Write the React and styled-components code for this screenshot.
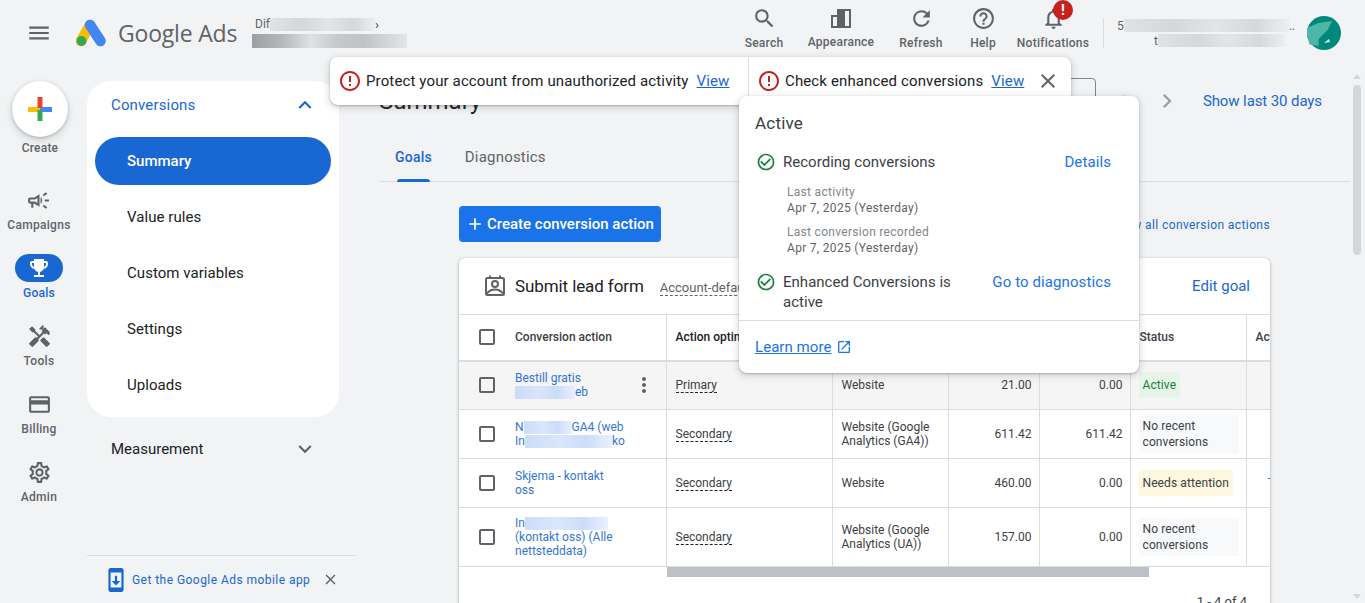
import styled, { createGlobalStyle } from "styled-components";
import {
  MdMenu,
  MdSearch,
  MdRefresh,
  MdHelpOutline,
  MdNotificationsNone,
  MdOutlineCampaign,
  MdEmojiEvents,
  MdHandyman,
  MdPayment,
  MdOutlineSettings,
  MdExpandLess,
  MdExpandMore,
  MdClose,
  MdCheckCircleOutline,
  MdOpenInNew,
  MdErrorOutline,
  MdMoreVert,
  MdAdd,
  MdChevronLeft,
  MdChevronRight,
  MdSystemUpdate,
} from "react-icons/md";

const GlobalStyle = createGlobalStyle`
  html, body {
    margin: 0;
    padding: 0;
    background: #f1f3f4;
    font-family: Roboto, "Liberation Sans", sans-serif;
    color: #3c4043;
  }
  * { box-sizing: border-box; }
`;

const Blur = styled.span`
  display: inline-block;
  width: ${(p) => p.$w}px;
  height: ${(p) => (p.$tone === "dark" ? 14 : 13)}px;
  vertical-align: middle;
  background: ${(p) =>
    p.$tone === "blue"
      ? "linear-gradient(90deg, #c6dafa, #d6e4fb 40%, #c6dafa 70%, #e8f0fe)"
      : p.$tone === "dark"
        ? "linear-gradient(90deg, #9da0a3, #b2b4b6 18%, #dfe1e3 38%, #c6c8ca 55%, #c0c2c4 72%, #e4e5e6)"
        : "linear-gradient(90deg, #e0e2e4, #d5d8da 30%, #e2e4e6 55%, #d6d9db 80%, #eceef0)"};
`;

const railItems = [
  { label: "Campaigns", Icon: MdOutlineCampaign },
  { label: "Goals", Icon: MdEmojiEvents, active: true },
  { label: "Tools", Icon: MdHandyman },
  { label: "Billing", Icon: MdPayment },
  { label: "Admin", Icon: MdOutlineSettings },
];

const rows = [
  {
    name: (
      <>
        Bestill gratis
        <br />
        <Blur $w={60} $tone="blue" />
        eb
      </>
    ),
    optimization: "Primary",
    source: "Website",
    value: "21.00",
    all: "0.00",
    status: "Active",
    tone: "active",
    selected: true,
    height: 49,
  },
  {
    name: (
      <>
        N<Blur $w={48} $tone="blue" />
        GA4 (web
        <br />
        In
        <Blur $w={87} $tone="blue" />
        ko
      </>
    ),
    optimization: "Secondary",
    source: "Website (Google Analytics (GA4))",
    value: "611.42",
    all: "611.42",
    status: "No recent conversions",
    tone: "idle",
    height: 49,
  },
  {
    name: "Skjema - kontakt oss",
    optimization: "Secondary",
    source: "Website",
    value: "460.00",
    all: "0.00",
    status: "Needs attention",
    tone: "warn",
    action: "Troubleshoot",
    height: 49,
  },
  {
    name: (
      <>
        In
        <Blur $w={83} $tone="blue" />
        <br />
        (kontakt oss) (Alle nettsteddata)
      </>
    ),
    optimization: "Secondary",
    source: "Website (Google Analytics (UA))",
    value: "157.00",
    all: "0.00",
    status: "No recent conversions",
    tone: "idle",
    height: 59,
  },
];

function AppearanceIcon() {
  return (
    <svg width="24" height="24" viewBox="0 0 24 24" fill="#5f6368">
      <path fillRule="evenodd" d="M2 9h6V3h14v19H2zM4 11v9h4v-9zM16 5v15h4V5z" />
    </svg>
  );
}

function LeadFormIcon() {
  return (
    <svg width="24" height="24" viewBox="0 0 24 24" fill="none" stroke="#5f6368" strokeWidth="2">
      <rect x="3" y="4" width="18" height="17" rx="1.5" />
      <path d="M7 1.5v3M17 1.5v3" />
      <circle cx="12" cy="10" r="3" />
      <path d="M4 19.500c2-2.800 5-4 8-4s6 1.200 8 4" />
    </svg>
  );
}

export default function App() {
  return (
    <Page>
      <GlobalStyle />
      <Header>
        <MenuButton>
          <MdMenu size={26} />
        </MenuButton>
        <Logo width="32" height="28" viewBox="0 0 32 28">
          <path d="M14 6 5 22" stroke="#fbbc04" strokeWidth="10.5" strokeLinecap="round" />
          <path d="M14 6l10.500 16" stroke="#4285f4" strokeWidth="10.5" strokeLinecap="round" />
          <circle cx="5.500" cy="22" r="5" fill="#34a853" />
        </Logo>
        <Brand>Google Ads</Brand>
        <AccountName>
          <AccountLine>
            Dif
            <Blur $w={105} />
            <SmallCaret>›</SmallCaret>
          </AccountLine>
          <AccountBlur $w={155} $tone="dark" />
        </AccountName>
        <Tools>
          <ToolItem $w={64}>
            <MdSearch size={25} />
            <span>Search</span>
          </ToolItem>
          <ToolItem $w={90}>
            <AppearanceIcon />
            <span>Appearance</span>
          </ToolItem>
          <ToolItem $w={70}>
            <MdRefresh size={25} />
            <span>Refresh</span>
          </ToolItem>
          <ToolItem $w={54}>
            <MdHelpOutline size={25} />
            <span>Help</span>
          </ToolItem>
          <ToolItem $w={86}>
            <MdNotificationsNone size={25} />
            <span>Notifications</span>
            <Badge>!</Badge>
          </ToolItem>
        </Tools>
        <UserBox>
          <UserLine>
            5<Blur $w={165} />
            ..
          </UserLine>
          <UserLine $inset>
            t<Blur $w={127} />
          </UserLine>
        </UserBox>
        <Avatar width="34" height="34" viewBox="0 0 34 34">
          <circle cx="17" cy="17" r="17" fill="#00897b" />
          <path d="M0 12 11.600 7 25 5l-4.400 9-9 9v7l-9-1.400L0 20z" fill="#4db6a5" />
          <path d="M17 27l5-4 1 3z" fill="#dff3f0" />
        </Avatar>
      </Header>

      <Body>
        <Rail>
          <CreateItem>
            <CreateButton>
              <svg width="24" height="24" viewBox="0 0 24 24">
                <rect x="0" y="10" width="12" height="5" fill="#fbbc04" />
                <rect x="12" y="10" width="12" height="5" fill="#4285f4" />
                <rect x="9.500" y="0" width="5" height="11" fill="#ea4335" />
                <rect x="9.500" y="13" width="5" height="11" fill="#34a853" />
              </svg>
            </CreateButton>
            <span>Create</span>
          </CreateItem>
          {railItems.map(({ label, Icon, active }) => (
            <RailItem key={label} $active={active}>
              <RailIcon $active={active}>
                <Icon size={active ? 24 : 25} />
              </RailIcon>
              <span>{label}</span>
            </RailItem>
          ))}
        </Rail>

        <SideColumn>
          <SideCard>
            <SideHeader>
              Conversions
              <MdExpandLess size={26} />
            </SideHeader>
            <SideLink $active>Summary</SideLink>
            <SideLink>Value rules</SideLink>
            <SideLink>Custom variables</SideLink>
            <SideLink>Settings</SideLink>
            <SideLink>Uploads</SideLink>
          </SideCard>
          <SideSection>
            Measurement
            <MdExpandMore size={26} />
          </SideSection>
          <AppPromo>
            <MdSystemUpdate size={26} />
            <span>Get the Google Ads mobile app</span>
            <MdClose size={17} />
          </AppPromo>
        </SideColumn>

        <Main>
          <TopRow>
            <Title>Summary</Title>
            <DateBox />
            <PagerIcon $faded>
              <MdChevronLeft size={28} />
            </PagerIcon>
            <PagerIcon>
              <MdChevronRight size={28} />
            </PagerIcon>
            <RangeLink>Show last 30 days</RangeLink>
          </TopRow>
          <Tabs>
            <Tab $active>Goals</Tab>
            <Tab>Diagnostics</Tab>
          </Tabs>
          <Content>
            <ActionRow>
              <CreateAction>
                <MdAdd size={20} />
                Create conversion action
              </CreateAction>
              <AllLink>View all conversion actions</AllLink>
            </ActionRow>
            <Card>
              <CardHeader>
                <LeadFormIcon />
                <CardTitle>Submit lead form</CardTitle>
                <DottedLabel>Account-default</DottedLabel>
                <EditLink>Edit goal</EditLink>
              </CardHeader>
              <TableClip>
                <Table>
                  <colgroup>
                    <col width="207" />
                    <col width="166" />
                    <col width="116" />
                    <col width="91" />
                    <col width="91" />
                    <col width="116" />
                    <col width="130" />
                  </colgroup>
                  <thead>
                    <tr>
                      <HeadCell>
                        <NameCell>
                          <Check />
                          Conversion action
                        </NameCell>
                      </HeadCell>
                      <HeadCell $strong>Action optimization</HeadCell>
                      <HeadCell>Action source</HeadCell>
                      <HeadCell>All conv.</HeadCell>
                      <HeadCell>Value</HeadCell>
                      <HeadCell>Status</HeadCell>
                      <HeadCell>Actions</HeadCell>
                    </tr>
                  </thead>
                  <tbody>
                    {rows.map((row) => (
                      <Row key={row.value} $selected={row.selected} style={{ height: row.height }}>
                        <Cell>
                          <NameCell>
                            <Check />
                            <ActionName>{row.name}</ActionName>
                            {row.selected && (
                              <MoreIcon>
                                <MdMoreVert size={24} />
                              </MoreIcon>
                            )}
                          </NameCell>
                        </Cell>
                        <Cell>
                          <Optimization>{row.optimization}</Optimization>
                        </Cell>
                        <Cell>{row.source}</Cell>
                        <NumberCell>{row.value}</NumberCell>
                        <NumberCell>{row.all}</NumberCell>
                        <StatusCell>
                          <StatusChip $tone={row.tone}>{row.status}</StatusChip>
                        </StatusCell>
                        <Cell>{row.action && <Troubleshoot>{row.action}</Troubleshoot>}</Cell>
                      </Row>
                    ))}
                  </tbody>
                </Table>
              </TableClip>
              <HScroll>
                <HThumb />
              </HScroll>
              <Pagination>1 - 4 of 4</Pagination>
            </Card>
          </Content>
        </Main>
      </Body>

      <Banner>
        <BannerPart $w={418}>
          <MdErrorOutline size={24} />
          <span>Protect your account from unauthorized activity</span>
          <BannerLink>View</BannerLink>
        </BannerPart>
        <BannerPart $w={323}>
          <MdErrorOutline size={24} />
          <span>Check enhanced conversions</span>
          <BannerLink>View</BannerLink>
          <BannerClose>
            <MdClose size={24} />
          </BannerClose>
        </BannerPart>
      </Banner>

      <Popover>
        <PopoverTitle>Active</PopoverTitle>
        <StatusRow>
          <MdCheckCircleOutline size={20} />
          <StatusText>Recording conversions</StatusText>
          <PopoverLink>Details</PopoverLink>
        </StatusRow>
        <Detail>
          Last activity
          <strong>Apr 7, 2025 (Yesterday)</strong>
        </Detail>
        <Detail>
          Last conversion recorded
          <strong>Apr 7, 2025 (Yesterday)</strong>
        </Detail>
        <StatusRow $spaced>
          <MdCheckCircleOutline size={20} />
          <StatusText>Enhanced Conversions is active</StatusText>
          <PopoverLink>Go to diagnostics</PopoverLink>
        </StatusRow>
        <PopoverFooter>
          <LearnMore>Learn more</LearnMore>
          <MdOpenInNew size={16} />
        </PopoverFooter>
      </Popover>

      <PageScroll>
        <ScrollArrow $dir="up" />
        <ScrollThumb />
        <ScrollArrow $dir="down" />
      </PageScroll>
    </Page>
  );
}

const Page = styled.div`
  position: relative;
  width: 1365px;
  height: 603px;
  overflow: hidden;
  background: #f1f3f4;
`;

const Header = styled.header`
  display: flex;
  align-items: center;
  height: 66px;
  padding-left: 26px;
  padding-right: 24px;
`;

const MenuButton = styled.div`
  display: flex;
  width: 26px;
  color: #5f6368;
`;

const Logo = styled.svg`
  margin-left: 24px;
  margin-top: -1px;
`;

const Brand = styled.div`
  margin-left: 10px;
  width: 137px;
  font-family: "Open Sans", sans-serif;
  font-size: 23px;
  letter-spacing: -0.2px;
  color: #5f6368;
`;

const AccountName = styled.div`
  display: flex;
  flex-direction: column;
  margin-top: -3px;
  font-size: 12px;
  color: #5f6368;
  gap: 1px;
`;

const AccountBlur = styled(Blur)`
  margin-left: -3px;
`;

const AccountLine = styled.div`
  display: flex;
  align-items: center;
  height: 17px;
`;

const SmallCaret = styled.span`
  font-size: 13px;
  color: #3c4043;
`;

const Tools = styled.nav`
  display: flex;
  margin-left: auto;
  margin-right: 7px;
`;

const ToolItem = styled.div`
  position: relative;
  display: flex;
  flex-direction: column;
  align-items: center;
  gap: 5px;
  width: ${(p) => p.$w}px;
  margin-top: -11px;
  font-size: 12px;
  font-weight: 500;
  letter-spacing: 0.25px;
  color: #5f6368;
`;

const Badge = styled.span`
  position: absolute;
  top: -6px;
  left: 43px;
  width: 20px;
  height: 20px;
  border-radius: 50%;
  background: #c5221f;
  color: #fff;
  font-size: 14px;
  font-weight: 700;
  line-height: 20px;
  text-align: center;
`;

const UserBox = styled.div`
  display: flex;
  flex-direction: column;
  align-items: flex-end;
  width: 192px;
  height: 30px;
  padding-left: 12px;
  border-left: 1px solid #dadce0;
  font-size: 12px;
  color: #5f6368;
  justify-content: center;
`;

const UserLine = styled.div`
  display: flex;
  align-items: center;
  height: 18px;
  padding-right: ${(p) => (p.$inset ? 10 : 0)}px;
`;

const Avatar = styled.svg`
  margin-left: 12px;
`;

const Body = styled.div`
  display: flex;
  height: 537px;
  padding-top: 15px;
`;

const Rail = styled.aside`
  display: flex;
  flex-direction: column;
  align-items: center;
  width: 78px;
  flex: none;
`;

const CreateItem = styled.div`
  display: flex;
  flex-direction: column;
  align-items: center;
  gap: 4px;
  margin-bottom: 31px;
  margin-left: 2px;
  font-size: 12px;
  font-weight: 500;
  letter-spacing: 0.2px;
  color: #5f6368;
`;

const CreateButton = styled.div`
  display: flex;
  align-items: center;
  justify-content: center;
  width: 56px;
  height: 56px;
  border-radius: 50%;
  background: #fff;
  box-shadow: 0 1px 3px rgba(60, 64, 67, 0.3), 0 4px 8px rgba(60, 64, 67, 0.15);
`;

const RailItem = styled.div`
  display: flex;
  flex-direction: column;
  align-items: center;
  height: 68px;
  font-size: 12px;
  font-weight: 500;
  letter-spacing: 0.3px;
  color: ${(p) => (p.$active ? "#1967d2" : "#5f6368")};
`;

const RailIcon = styled.div`
  display: flex;
  align-items: center;
  justify-content: center;
  width: 48px;
  height: 28px;
  margin-bottom: 4px;
  border-radius: 14px;
  background: ${(p) => (p.$active ? "#1967d2" : "transparent")};
  color: ${(p) => (p.$active ? "#fff" : "#5f6368")};
`;

const SideColumn = styled.aside`
  display: flex;
  flex-direction: column;
  width: 268px;
  flex: none;
  margin-left: 9px;
`;

const SideCard = styled.div`
  width: 252px;
  height: 336px;
  padding: 0 8px;
  border-radius: 24px;
  background: #fff;
`;

const SideHeader = styled.div`
  display: flex;
  align-items: center;
  justify-content: space-between;
  height: 48px;
  padding: 0 13px 0 16px;
  margin-bottom: 8px;
  font-size: 15px;
  letter-spacing: 0.15px;
  color: #1967d2;
`;

const SideLink = styled.div`
  display: flex;
  align-items: center;
  height: 48px;
  margin-bottom: 8px;
  padding-left: 32px;
  border-radius: 24px;
  font-size: 15px;
  font-weight: ${(p) => (p.$active ? 500 : 400)};
  letter-spacing: ${(p) => (p.$active ? 0 : 0.05)}px;
  background: ${(p) => (p.$active ? "#1967d2" : "transparent")};
  color: ${(p) => (p.$active ? "#fff" : "#202124")};
`;

const SideSection = styled.div`
  display: flex;
  align-items: center;
  justify-content: space-between;
  width: 252px;
  height: 48px;
  margin-top: 8px;
  padding: 0 21px 0 24px;
  font-size: 15px;
  color: #202124;
  svg {
    color: #5f6368;
  }
`;

const AppPromo = styled.div`
  display: flex;
  align-items: center;
  height: 48px;
  margin-top: auto;
  padding-left: 16px;
  border-top: 1px solid #dadce0;
  font-size: 12px;
  letter-spacing: 0.45px;
  color: #1967d2;
  span {
    margin: 0 12px 0 3px;
  }
  svg:last-child {
    color: #5f6368;
  }
`;

const Main = styled.main`
  flex: 1;
  min-width: 0;
  margin-left: 24px;
  margin-right: 15px;
  margin-top: -3px;
`;

const TopRow = styled.div`
  display: flex;
  align-items: center;
  height: 46px;
  padding-right: 28px;
`;

const Title = styled.h1`
  margin: 0 auto 0 0;
  font-size: 24px;
  font-weight: 400;
  color: #202124;
`;

const DateBox = styled.div`
  align-self: flex-start;
  width: 120px;
  height: 40px;
  border: 1px solid #80868b;
  border-radius: 4px;
`;

const PagerIcon = styled.div`
  display: flex;
  margin-left: ${(p) => (p.$faded ? 12 : 17)}px;
  color: ${(p) => (p.$faded ? "#dadce0" : "#9aa0a6")};
`;

const RangeLink = styled.div`
  margin-left: 22px;
  font-size: 15px;
  letter-spacing: -0.1px;
  color: #1967d2;
`;

const Tabs = styled.div`
  display: flex;
  height: 58px;
  padding: 13px 0 0 16px;
  gap: 33px;
  border-bottom: 1px solid #dadce0;
`;

const Tab = styled.div`
  position: relative;
  height: 45px;
  padding-top: ${(p) => (p.$active ? 12 : 11)}px;
  font-size: ${(p) => (p.$active ? 14 : 15)}px;
  font-weight: ${(p) => (p.$active ? 500 : 400)};
  letter-spacing: 0.2px;
  color: ${(p) => (p.$active ? "#1967d2" : "#5f6368")};
  ${(p) =>
    p.$active &&
    `&::after {
      content: "";
      position: absolute;
      left: 2px;
      right: 2px;
      bottom: 0;
      height: 3px;
      border-radius: 3px 3px 0 0;
      background: #1967d2;
    }`}
`;

const Content = styled.div`
  width: 811px;
  margin-left: 80px;
  padding-top: 24px;
`;

const ActionRow = styled.div`
  display: flex;
  align-items: center;
  justify-content: space-between;
  height: 36px;
`;

const CreateAction = styled.div`
  display: flex;
  align-items: center;
  gap: 2px;
  height: 36px;
  width: 202px;
  padding-left: 6px;
  border-radius: 4px;
  background: #1a73e8;
  color: #fff;
  font-size: 15px;
  font-weight: 500;
`;

const AllLink = styled.div`
  margin-top: 1px;
  font-size: 12px;
  color: #1967d2;
  letter-spacing: 0.4px;
`;

const Card = styled.section`
  margin-top: 16px;
  border-radius: 6px 6px 0 0;
  background: #fff;
  box-shadow: 0 1px 2px rgba(60, 64, 67, 0.3), 0 1px 3px 1px rgba(60, 64, 67, 0.15);
`;

const CardHeader = styled.div`
  display: flex;
  align-items: center;
  height: 56px;
  padding: 0 20px 0 24px;
  svg {
    flex: none;
  }
`;

const CardTitle = styled.div`
  margin-left: 8px;
  font-size: 17px;
  letter-spacing: -0.1px;
  color: #202124;
`;

const DottedLabel = styled.div`
  margin-left: 16px;
  margin-top: 3px;
  font-size: 13px;
  color: #5f6368;
  border-bottom: 1px dashed #5f6368;
`;

const EditLink = styled.div`
  margin-left: auto;
  font-size: 15px;
  color: #1967d2;
`;

const TableClip = styled.div`
  overflow: hidden;
`;

const Table = styled.table`
  width: 917px;
  table-layout: fixed;
  border-collapse: collapse;
  font-size: 12px;
  color: #3c4043;
`;

const HeadCell = styled.th`
  height: 46px;
  padding: 0 8px 0 9px;
  border-top: 1px solid #dadce0;
  border-bottom: 2px solid #dadce0;
  border-right: 1px solid #dadce0;
  font-weight: 500;
  font-size: 12px;
  text-align: left;
  white-space: nowrap;
  overflow: hidden;
  color: ${(p) => (p.$strong ? "#202124" : "#3c4043")};
  &:first-child {
    padding: 0;
  }
`;

const Row = styled.tr`
  background: ${(p) => (p.$selected ? "#f5f5f5" : "#fff")};
`;

const Cell = styled.td`
  padding: 0 8px 0 9px;
  border-bottom: 1px solid #dadce0;
  border-right: 1px solid #dadce0;
  line-height: 14px;
  &:first-child {
    padding: 0;
  }
`;

const NumberCell = styled(Cell)`
  padding-right: 7px;
  text-align: right;
`;

const StatusCell = styled(Cell)`
  padding: 0 8px;
`;

const NameCell = styled.div`
  position: relative;
  display: flex;
  align-items: center;
  height: 100%;
  padding-left: 20px;
`;

const Check = styled.span`
  flex: none;
  width: 16px;
  height: 16px;
  margin-right: 20px;
  border: 2px solid #5f6368;
  border-radius: 2px;
`;

const ActionName = styled.div`
  width: 110px;
  color: #1967d2;
  opacity: 0.9;
`;

const MoreIcon = styled.div`
  position: absolute;
  right: 10px;
  top: 50%;
  transform: translateY(-50%);
  display: flex;
  color: #5f6368;
`;

const Optimization = styled.span`
  border-bottom: 1px dashed #202124;
`;

const StatusChip = styled.div`
  display: inline-block;
  padding: ${(p) => (p.$tone === "idle" ? "3px 4px" : "5px 4px")};
  border-radius: 2px;
  line-height: 16px;
  letter-spacing: 0.1px;
  max-width: ${(p) => (p.$tone === "idle" ? "100px" : "none")};
  width: ${(p) => (p.$tone === "idle" ? "100px" : "auto")};
  background: ${(p) =>
    p.$tone === "active" ? "#e6f4ea" : p.$tone === "warn" ? "#fef7e0" : "#f8f9fa"};
  color: ${(p) => (p.$tone === "active" ? "#188038" : "#3c4043")};
`;

const Troubleshoot = styled.span`
  margin-left: 12px;
  white-space: nowrap;
  color: #1967d2;
`;

const HScroll = styled.div`
  height: 10px;
  padding-left: 208px;
`;

const HThumb = styled.div`
  width: 482px;
  height: 10px;
  background: #bdc1c6;
`;

const Pagination = styled.div`
  display: flex;
  justify-content: flex-end;
  padding: 17px 23px 0 0;
  font-size: 13px;
  color: #3c4043;
`;

const Banner = styled.div`
  position: absolute;
  left: 330px;
  top: 57px;
  display: flex;
  width: 741px;
  height: 48px;
  border-radius: 8px;
  background: #fff;
  box-shadow: 0 1px 2px rgba(60, 64, 67, 0.3), 0 2px 6px 2px rgba(60, 64, 67, 0.15);
`;

const BannerPart = styled.div`
  display: flex;
  align-items: center;
  width: ${(p) => p.$w}px;
  padding-left: 8px;
  font-size: 15px;
  font-weight: 400;
  letter-spacing: 0.13px;
  color: #202124;
  & + & {
    border-left: 1px solid #dadce0;
  }
  > svg {
    flex: none;
    margin-right: 4px;
    color: #c5221f;
  }
`;

const BannerLink = styled.span`
  margin-left: 8px;
  color: #1967d2;
  text-decoration: underline;
`;

const BannerClose = styled.span`
  display: flex;
  margin-left: 12px;
  color: #5f6368;
`;

const Popover = styled.div`
  position: absolute;
  left: 739px;
  top: 96px;
  width: 400px;
  height: 277px;
  padding: 0 16px;
  border-radius: 8px;
  background: #fff;
  box-shadow: 0 1px 2px rgba(60, 64, 67, 0.3), 0 2px 6px 2px rgba(60, 64, 67, 0.15);
`;

const PopoverTitle = styled.div`
  padding-top: 17px;
  height: 56px;
  font-size: 17px;
  letter-spacing: 0.2px;
  color: #3c4043;
`;

const StatusRow = styled.div`
  display: flex;
  align-items: flex-start;
  margin-top: ${(p) => (p.$spaced ? 16 : 0)}px;
  margin-bottom: 12px;
  line-height: 20px;
  > svg {
    flex: none;
    margin-left: 1px;
    color: #188038;
  }
`;

const StatusText = styled.div`
  width: 190px;
  margin-left: 7px;
  font-size: 15px;
  letter-spacing: 0.02px;
  color: #3c4043;
`;

const PopoverLink = styled.div`
  margin-left: auto;
  margin-right: 12px;
  font-size: 15px;
  letter-spacing: 0.1px;
  color: #1a73e8;
`;

const Detail = styled.div`
  padding-left: 32px;
  margin-bottom: 8px;
  font-size: 12px;
  line-height: 16px;
  letter-spacing: 0.3px;
  color: #80868b;
  strong {
    display: block;
    font-weight: 400;
    color: #5f6368;
  }
`;

const PopoverFooter = styled.div`
  display: flex;
  align-items: center;
  gap: 5px;
  height: 52px;
  margin: -4px -16px 0;
  padding-left: 16px;
  border-top: 1px solid #dadce0;
  color: #1a73e8;
`;

const LearnMore = styled.span`
  font-size: 15px;
  letter-spacing: 0.05px;
  text-decoration: underline;
`;

const PageScroll = styled.div`
  position: absolute;
  right: 4px;
  top: 74px;
  bottom: 4px;
  display: flex;
  flex-direction: column;
  align-items: center;
  width: 8px;
`;

const ScrollThumb = styled.div`
  width: 8px;
  height: 170px;
  margin-top: 6px;
  margin-bottom: auto;
  border-radius: 4px;
  background: #d4d6d8;
`;

const ScrollArrow = styled.div`
  width: 0;
  height: 0;
  border-left: 4px solid transparent;
  border-right: 4px solid transparent;
  ${(p) =>
    p.$dir === "up"
      ? "border-bottom: 5px solid #d4d6d8;"
      : "border-top: 5px solid #d4d6d8;"}
`;
